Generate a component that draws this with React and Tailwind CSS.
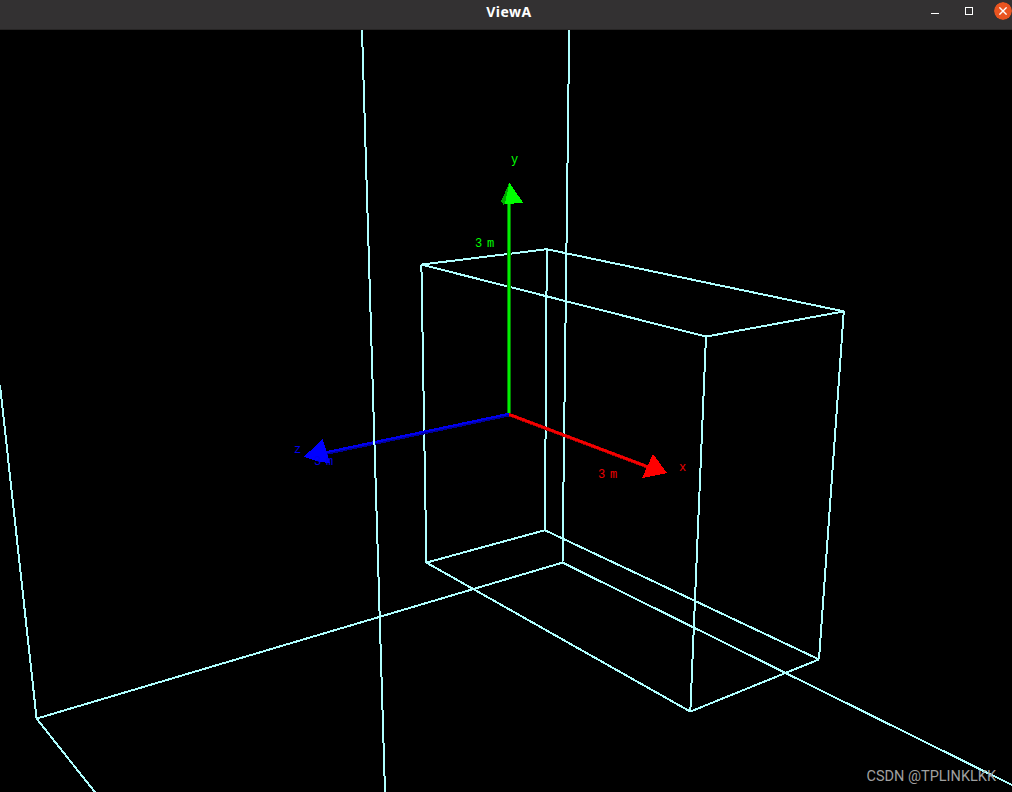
const EDGE = '#afffff';

// Box corners, projected to the viewport (origin at the top left of the canvas)
const box = {
  a: [421.4, 234.6],
  b: [546.8, 219.2],
  c: [843.8, 281.4],
  d: [706, 306.6],
  e: [426.4, 532.6],
  f: [544.9, 500.2],
  g: [819, 629.4],
  h: [690.3, 681.6],
};

const boxEdges = [
  ['a', 'b'], ['b', 'c'], ['c', 'd'], ['d', 'a'],
  ['e', 'f'], ['f', 'g'], ['g', 'h'], ['h', 'e'],
  ['a', 'e'], ['b', 'f'], ['c', 'g'], ['d', 'h'],
];

const roomEdges = [
  [[569.2, 0], [562.5, 532.6]],
  [[0, 355], [36.6, 688.6]],
  [[36.6, 688.6], [95.6, 763]],
  [[36.6, 688.6], [562.5, 532.6]],
  [[562.5, 532.6], [1012, 755]],
];

function Edge({ from, to }) {
  return <line x1={from[0]} y1={from[1]} x2={to[0]} y2={to[1]} stroke={EDGE} strokeWidth="2" />;
}

function Label({ x, y, fill, children }) {
  return (
    <text
      x={x}
      y={y}
      fill={fill}
      className="whitespace-pre font-['Liberation_Mono','DejaVu_Sans_Mono',monospace] text-[12px] tracking-[-1.2px]"
    >
      {children}
    </text>
  );
}

function TitleBar() {
  return (
    <header className="grid h-[30px] shrink-0 grid-cols-[1fr_auto_1fr] border-b border-[#272525] bg-[#333132] pb-1.5">
      <div />
      <h1 className="self-center pl-1.5 font-['Noto_Sans','Open_Sans',sans-serif] text-[14px] leading-none font-bold tracking-[0.5px] text-white">
        ViewA
      </h1>
      <div className="flex items-center justify-end">
        <button className="mt-1 mr-[26px] h-px w-2 bg-white" aria-label="Minimize" />
        <button className="mr-5 mb-0.5 size-2 border border-white" aria-label="Maximize" />
        <button
          className="-mr-px mb-px flex size-5 shrink-0 items-center justify-center rounded-full border border-[#333132] bg-[#e95420] bg-clip-padding"
          aria-label="Close"
        >
          <svg width="8" height="8" viewBox="0 0 8 8" stroke="#fff" strokeWidth="1.4">
            <path d="M.4 .4l7.2 7.2M7.6 .4L.4 7.6" />
          </svg>
        </button>
      </div>
    </header>
  );
}

function Scene() {
  return (
    <svg width="1012" height="762" viewBox="0 0 1012 762" className="block">
      <g shapeRendering="crispEdges">
        {roomEdges.map(([from, to], i) => <Edge key={i} from={from} to={to} />)}
        {boxEdges.map(([p, q]) => <Edge key={p + q} from={box[p]} to={box[q]} />)}

        {/* z axis */}
        <path d="M509 384.8L326 423.3" stroke="#000099" strokeWidth="3.4" />
        <path d="M509 383.8L326 422.3" stroke="#0000ee" strokeWidth="2.2" />
        <path d="M304 426.7L322.7 409L330 433.5L316.7 431Z" fill="#0000ff" />

        {/* x axis */}
        <path d="M509 384.5L648 437" stroke="#a00000" strokeWidth="3.6" />
        <path d="M509 384.3L648 436.8" stroke="#f40000" strokeWidth="2.4" />
        <path d="M667 443L653 424L642 448Z" fill="#ff0000" />

        {/* y axis */}
        <path d="M507 172h4v211h-4z" fill="#008800" />
        <path d="M508 172h2v211h-2z" fill="#00ee00" />
        <path d="M509.3 152.6L501 171.5L503.8 175L507 172Z" fill="#00a800" />
        <path d="M509.3 152.6L523.3 173L505 174Z" fill="#00ff00" />

        <Edge from={[362, 0]} to={[385, 762]} />
      </g>

      <Label x="511" y="133" fill="#00ff00">y</Label>
      <Label x="475" y="217" fill="#00ff00">3 m</Label>
      <Label x="679" y="441" fill="#ee0000">x</Label>
      <Label x="598" y="448" fill="#ee0000">3 m</Label>
      <Label x="294" y="423" fill="#0000ee">z</Label>
      <Label x="314" y="435" fill="#0000ee">3 m</Label>
    </svg>
  );
}

export default function App() {
  return (
    <div className="relative flex h-[792px] w-[1012px] flex-col overflow-hidden bg-black">
      <TitleBar />
      <Scene />
      <span className="absolute right-4 bottom-[5px] font-['Roboto',sans-serif] text-[14.5px] leading-5 whitespace-nowrap text-[#a0a0a0]">
        CSDN @TPLINKLKK
      </span>
    </div>
  );
}
